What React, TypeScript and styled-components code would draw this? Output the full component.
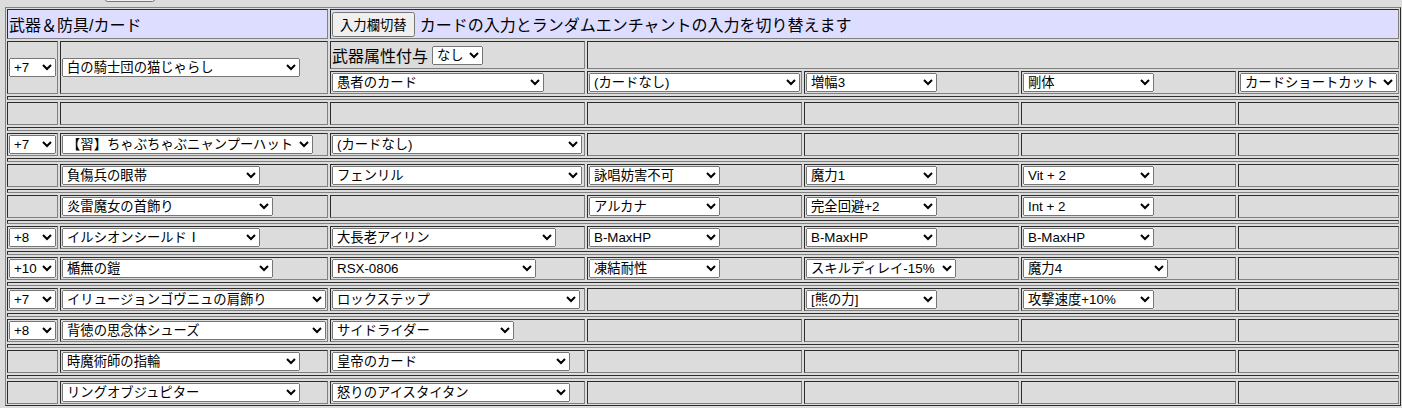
import React from 'react';
import styled, { createGlobalStyle } from 'styled-components';

type Slot = [string, number] | null;

interface GearRow {
  refine?: string;
  slots: Slot[];
}

const baseFont = `'Liberation Sans', 'Noto Sans CJK JP', sans-serif`;

const rows: GearRow[] = [
  { slots: [null, null, null, null, null, null] },
  { refine: '+7', slots: [['【習】ちゃぶちゃぶニャンプーハット', 251], ['(カードなし)', 250], null, null, null, null] },
  { slots: [['負傷兵の眼帯', 198], ['フェンリル', 250], ['詠唱妨害不可', 131], ['魔力1', 131], ['Vit + 2', 131], null] },
  { slots: [['炎雷魔女の首飾り', 211], null, ['アルカナ', 131], ['完全回避+2', 131], ['Int + 2', 131], null] },
  { refine: '+8', slots: [['イルシオンシールドⅠ', 198], ['大長老アイリン', 224], ['B-MaxHP', 131], ['B-MaxHP', 131], ['B-MaxHP', 131], null] },
  { refine: '+10', slots: [['楯無の鎧', 211], ['RSX-0806', 204], ['凍結耐性', 131], ['スキルディレイ-15%', 150], ['魔力4', 145], null] },
  { refine: '+7', slots: [['イリュージョンゴヴニュの肩飾り', 264], ['ロックステップ', 248], null, ['[熊の力]', 131], ['攻撃速度+10%', 131], null] },
  { refine: '+8', slots: [['背徳の思念体シューズ', 264], ['サイドライダー', 182], null, null, null, null] },
  { slots: [['時魔術師の指輪', 238], ['皇帝のカード', 238], null, null, null, null] },
  { slots: [['リングオブジュピター', 238], ['怒りのアイスタイタン', 238], null, null, null, null] },
];

const GlobalStyle = createGlobalStyle`
  body {
    margin: 0;
    background: #dcdcdc;
    font-family: ${baseFont};
    color: #000;
  }
`;

const Page = styled.div`
  padding-left: 5px;
`;

const TopStrip = styled.div`
  height: 7px;
  overflow: hidden;
  padding-left: 100px;
`;

const CutButton = styled.button`
  display: block;
  width: 50px;
  height: 24px;
  margin-top: -22px;
`;

const Sheet = styled.div`
  box-sizing: border-box;
  width: 1396px;
  border: 1px outset gray;
  padding: 1px;
  display: grid;
  grid-template-columns: 51px 268px 255px 215px 215px 215px 161px;
  grid-template-rows: 30px 28px 23px repeat(10, 4px 23px);
  gap: 2px;
`;

const Cell = styled.div<{ $span?: number; $rows?: number; $center?: boolean; $head?: boolean }>`
  box-sizing: border-box;
  grid-column: span ${(p) => p.$span ?? 1};
  grid-row: span ${(p) => p.$rows ?? 1};
  min-width: 0;
  border: 1px inset gray;
  padding: 0 1px;
  display: flex;
  align-items: center;
  justify-content: ${(p) => (p.$center ? 'center' : 'flex-start')};
  background: ${(p) => (p.$head ? '#ddddff' : 'transparent')};
  font-size: 16px;
  white-space: nowrap;
`;

const Separator = styled.div`
  box-sizing: border-box;
  grid-column: 1 / -1;
  border: 1px inset gray;
`;

const Picker = styled.select<{ $w: number }>`
  box-sizing: border-box;
  flex: none;
  width: ${(p) => p.$w}px;
  height: 19px;
  font-family: ${baseFont};
  font-size: 13.33px;
  color: #000;
`;

const SwitchButton = styled.button`
  flex: none;
  height: 25px;
  padding: 1px 6px;
  margin-right: 5px;
  font-family: ${baseFont};
  font-size: 13.33px;
  color: #000;
`;

const Label = styled.span`
  margin-right: 4px;
`;

function Choice({ slot }: { slot: [string, number] }) {
  const [label, width] = slot;
  return (
    <Picker $w={width} defaultValue={label}>
      <option value={label}>{label}</option>
    </Picker>
  );
}

function Refine({ value }: { value?: string }) {
  return <Cell $center>{value && <Choice slot={[value, 47]} />}</Cell>;
}

export default function App() {
  return (
    <Page>
      <GlobalStyle />
      <TopStrip>
        <CutButton />
      </TopStrip>
      <Sheet>
        <Cell $span={2} $head>
          武器＆防具/カード
        </Cell>
        <Cell $span={5} $head>
          <SwitchButton>入力欄切替</SwitchButton>
          カードの入力とランダムエンチャントの入力を切り替えます
        </Cell>

        <Cell $rows={2} $center>
          <Choice slot={['+7', 47]} />
        </Cell>
        <Cell $rows={2}>
          <Choice slot={['白の騎士団の猫じゃらし', 238]} />
        </Cell>
        <Cell>
          <Label>武器属性付与</Label>
          <Choice slot={['なし', 51]} />
        </Cell>
        <Cell $span={4} />
        <Cell>
          <Choice slot={['愚者のカード', 212]} />
        </Cell>
        <Cell>
          <Choice slot={['(カードなし)', 211]} />
        </Cell>
        <Cell>
          <Choice slot={['増幅3', 131]} />
        </Cell>
        <Cell>
          <Choice slot={['剛体', 131]} />
        </Cell>
        <Cell>
          <Choice slot={['カードショートカット', 157]} />
        </Cell>

        {rows.map((row, i) => (
          <React.Fragment key={i}>
            <Separator />
            <Refine value={row.refine} />
            {row.slots.map((slot, j) => (
              <Cell key={j}>{slot && <Choice slot={slot} />}</Cell>
            ))}
          </React.Fragment>
        ))}
      </Sheet>
    </Page>
  );
}
